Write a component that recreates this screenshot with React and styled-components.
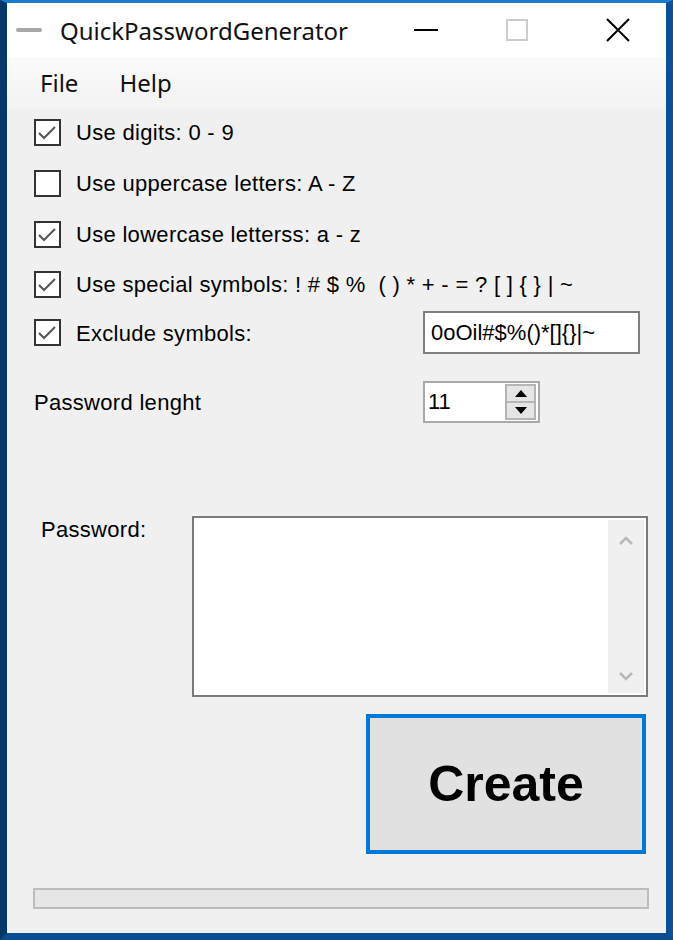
import React from 'react';
import styled, { createGlobalStyle } from 'styled-components';

const GlobalStyle = createGlobalStyle`
  html, body {
    margin: 0;
    padding: 0;
    background: #ffffff;
  }
  * {
    box-sizing: border-box;
  }
`;

const Window = styled.div`
  width: 673px;
  height: 940px;
  display: flex;
  flex-direction: column;
  background: #f0f0f0;
  border-style: solid;
  border-width: 3px 7px 7px 7px;
  border-color: #1a7bd0 #0d4f96 #0b4c92 #073766;
  box-shadow: inset 1px -1px 0 #e9f1fa;
  font-family: 'Liberation Sans', Arial, sans-serif;
  color: #000;
`;

const TitleBar = styled.div`
  height: 54px;
  flex: none;
  display: flex;
  align-items: center;
  background: #ffffff;
`;

const AppIcon = styled.span`
  width: 26px;
  height: 4px;
  margin-left: 9px;
  border-radius: 2px;
  background: #a8a8a8;
`;

const Title = styled.span`
  margin-left: 18px;
  flex: 1;
  font-family: 'Noto Sans', 'Open Sans', sans-serif;
  font-size: 24px;
  color: #111;
`;

const CaptionButton = styled.div`
  width: 96px;
  height: 54px;
  display: flex;
  align-items: center;
  justify-content: center;
`;

const MenuBar = styled.div`
  height: 51px;
  flex: none;
  display: flex;
  align-items: center;
  gap: 13px;
  padding-left: 19px;
  background: linear-gradient(#fafafa, #f3f3f3);
`;

const MenuItem = styled.span`
  padding: 0 14px;
  font-family: 'Noto Sans', 'Open Sans', sans-serif;
  font-size: 24px;
  color: #111;
`;

const Body = styled.div`
  flex: 1;
  display: flex;
  flex-direction: column;
  padding: 0 18px 0 27px;
`;

const Row = styled.div`
  display: flex;
  align-items: ${(p) => p.$align || 'center'};
  height: ${(p) => p.$height}px;
  margin-top: ${(p) => p.$top}px;
  flex: none;
`;

const CheckLabel = styled.label`
  display: flex;
  align-items: center;
  gap: 15px;
  width: ${(p) => (p.$width ? `${p.$width}px` : 'auto')};
  flex: none;
`;

const Box = styled.span`
  width: 27px;
  height: 27px;
  flex: none;
  display: flex;
  border: 2px solid #333;
  background: #fff;
`;

const Text = styled.span`
  font-size: 22px;
  line-height: 26px;
  letter-spacing: 0.3px;
  padding-top: 2px;
  white-space: pre;
  flex: none;
  width: ${(p) => (p.$width ? `${p.$width}px` : 'auto')};
  padding-left: ${(p) => p.$indent || 0}px;
  margin-top: ${(p) => p.$nudge || 0}px;
`;

const TextField = styled.div`
  width: 217px;
  height: 43px;
  display: flex;
  align-items: center;
  padding-left: 6px;
  background: #fff;
  border: 2px solid #7f7f7f;
  font-size: 22px;
`;

const NumericBox = styled.div`
  width: 117px;
  height: 42px;
  display: flex;
  align-items: stretch;
  background: #fff;
  border: 2px solid #a9a9a9;
`;

const NumericValue = styled.span`
  flex: 1;
  display: flex;
  align-items: center;
  padding-left: 3px;
  font-size: 22px;
`;

const Spinner = styled.div`
  width: 31px;
  margin: 1px 2px 1px 0;
  display: flex;
  flex-direction: column;
  border: 2px solid #b5b5b5;
  background: #e5e5e5;
`;

const SpinButton = styled.div`
  flex: 1;
  display: flex;
  align-items: center;
  justify-content: center;
  & + & {
    border-top: 2px solid #b5b5b5;
  }
`;

const Memo = styled.div`
  width: 456px;
  height: 181px;
  display: flex;
  justify-content: flex-end;
  padding: 2px;
  background: #fff;
  border: 2px solid #7a7a7a;
`;

const ScrollBar = styled.div`
  width: 36px;
  display: flex;
  flex-direction: column;
  justify-content: space-between;
  align-items: center;
  padding: 16px 0 12px;
  background: #f0f0f0;
`;

const CreateButton = styled.button`
  width: 280px;
  height: 140px;
  margin-left: auto;
  margin-right: 2px;
  border: 4px solid #0078d7;
  background: #e1e1e1;
  font-family: 'Liberation Sans', Arial, sans-serif;
  font-weight: bold;
  font-size: 50px;
  color: #000;
  padding: 0;
`;

const Progress = styled.div`
  height: 21px;
  margin: 34px -1px 0 -1px;
  border: 2px solid #bcbcbc;
  background: #e6e6e6;
`;

const CheckBox = ({ checked }) => (
  <Box>
    {checked && (
      <svg width="23" height="23" viewBox="0 0 23 23">
        <polyline points="3,12 8,17 19,6" fill="none" stroke="#555" strokeWidth="2" />
      </svg>
    )}
  </Box>
);

const options = [
  { label: 'Use digits: 0 - 9', checked: true, top: 11 },
  { label: 'Use uppercase letters: A - Z', checked: false, top: 25 },
  { label: 'Use lowercase letterss: a - z', checked: true, top: 25 },
  { label: 'Use special symbols: ! # $ %  ( ) * + - = ? [ ] { } | ~', checked: true, top: 24 },
];

const App = () => {
  return (
    <>
      <GlobalStyle />
      <Window>
        <TitleBar>
          <AppIcon />
          <Title>QuickPasswordGenerator</Title>
          <CaptionButton>
            <svg width="24" height="4" viewBox="0 0 24 4">
              <rect x="0" y="1" width="24" height="2" fill="#000" />
            </svg>
          </CaptionButton>
          <CaptionButton>
            <svg width="22" height="22" viewBox="0 0 22 22" style={{ marginLeft: -10 }}>
              <rect x="1" y="1" width="20" height="20" fill="none" stroke="#cccccc" strokeWidth="2" />
            </svg>
          </CaptionButton>
          <CaptionButton>
            <svg width="24" height="24" viewBox="0 0 24 24">
              <path d="M1 1 L23 23 M23 1 L1 23" stroke="#000" strokeWidth="2" />
            </svg>
          </CaptionButton>
        </TitleBar>
        <MenuBar>
          <MenuItem>File</MenuItem>
          <MenuItem>Help</MenuItem>
        </MenuBar>
        <Body>
          {options.map((o) => (
            <Row key={o.label} $height={26} $top={o.top}>
              <CheckLabel>
                <CheckBox checked={o.checked} />
                <Text>{o.label}</Text>
              </CheckLabel>
            </Row>
          ))}
          <Row $height={43} $top={14}>
            <CheckLabel $width={389}>
              <CheckBox checked />
              <Text>Exclude symbols:</Text>
            </CheckLabel>
            <TextField>0oOil#$%()*[]{'{'}{'}'}|~</TextField>
          </Row>
          <Row $height={42} $top={27}>
            <Text $width={389}>Password lenght</Text>
            <NumericBox>
              <NumericValue>11</NumericValue>
              <Spinner>
                <SpinButton>
                  <svg width="12" height="7" viewBox="0 0 12 7">
                    <polygon points="0,7 12,7 6,0" fill="#000" />
                  </svg>
                </SpinButton>
                <SpinButton>
                  <svg width="12" height="7" viewBox="0 0 12 7">
                    <polygon points="0,0 12,0 6,7" fill="#000" />
                  </svg>
                </SpinButton>
              </Spinner>
            </NumericBox>
          </Row>
          <Row $height={181} $top={93} $align="flex-start">
            <Text $width={158} $indent={7} $nudge={-1}>Password:</Text>
            <Memo>
              <ScrollBar>
                <svg width="14" height="9" viewBox="0 0 14 9">
                  <polyline points="1,8 7,2 13,8" fill="none" stroke="#b8b8b8" strokeWidth="2.5" />
                </svg>
                <svg width="14" height="9" viewBox="0 0 14 9">
                  <polyline points="1,1 7,7 13,1" fill="none" stroke="#b8b8b8" strokeWidth="2.5" />
                </svg>
              </ScrollBar>
            </Memo>
          </Row>
          <Row $height={140} $top={17}>
            <CreateButton>Create</CreateButton>
          </Row>
          <Progress />
        </Body>
      </Window>
    </>
  );
};

export default App;
